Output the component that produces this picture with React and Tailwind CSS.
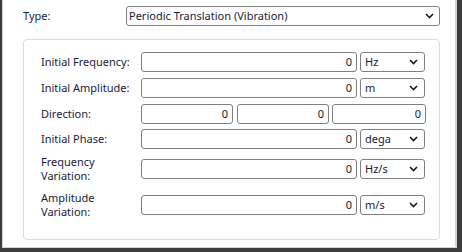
import React from "react";

const font = { fontFamily: '"Noto Sans", "Open Sans", sans-serif' };

function Chevron() {
  return (
    <svg width="9" height="6" viewBox="0 0 9 6" className="shrink-0">
      <polyline points="1,1 4.5,4.5 8,1" fill="none" stroke="#1a1a1a" strokeWidth="1.6" />
    </svg>
  );
}

function NumBox({ className }) {
  return (
    <div className={"h-[20px] border border-[#7f7f7f] rounded-[3px] bg-white flex items-center justify-end pr-[4px] text-[11px] text-[#1a1a1a] " + className}>
      0
    </div>
  );
}

function Unit({ text }) {
  return (
    <div className="ml-[3px] w-[65px] h-[20px] border border-[#7f7f7f] rounded-[3px] bg-white flex items-center justify-between pl-[4px] pr-[6px] text-[11px] text-[#1a1a3a]">
      <span>{text}</span>
      <Chevron />
    </div>
  );
}

function Label({ children }) {
  return (
    <div className="w-[100px] text-[11px] leading-[14px] text-[#1a1a3a]">{children}</div>
  );
}

function Row({ label, unit, className = "" }) {
  return (
    <div className={"flex items-center h-[20px] " + className}>
      <Label>{label}</Label>
      <NumBox className="w-[216px]" />
      <Unit text={unit} />
    </div>
  );
}

export default function App() {
  return (
    <div className="w-[462px] h-[252px] bg-[#3c3c3c] pl-[2px] pr-[5px] pb-[4px]" style={font}>
      <div className="w-full h-full bg-white border-l border-r-2 border-b border-[#d4d4d4] pt-[6px] pl-[20px] pr-[15px]">
        <div className="flex items-center h-[20px]">
          <div className="w-[103px] text-[11px] text-[#1a1a3a]">Type:</div>
          <div className="flex-1 h-[20px] border border-[#7f7f7f] rounded-[3px] flex items-center justify-between pl-[2px] pr-[5px] text-[11px] text-[#1a1a3a]">
            <span>Periodic Translation (Vibration)</span>
            <Chevron />
          </div>
        </div>
        <div className="mt-[13px] h-[201px] border border-[#dcdcdc] rounded-[4px] pt-[12px] pl-[17px]">
          <Row label="Initial Frequency:" unit="Hz" />
          <Row label="Initial Amplitude:" unit="m" className="mt-[6px]" />
          <div className="flex items-center h-[20px] mt-[6px]">
            <Label>Direction:</Label>
            <NumBox className="w-[92px]" />
            <NumBox className="w-[92px] ml-[4px]" />
            <NumBox className="w-[94px] ml-[3px]" />
          </div>
          <Row label="Initial Phase:" unit="dega" className="mt-[5px]" />
          <Row label={<>Frequency<br />Variation:</>} unit="Hz/s" className="mt-[10px]" />
          <Row label={<>Amplitude<br />Variation:</>} unit="m/s" className="mt-[16px]" />
        </div>
      </div>
    </div>
  );
}
